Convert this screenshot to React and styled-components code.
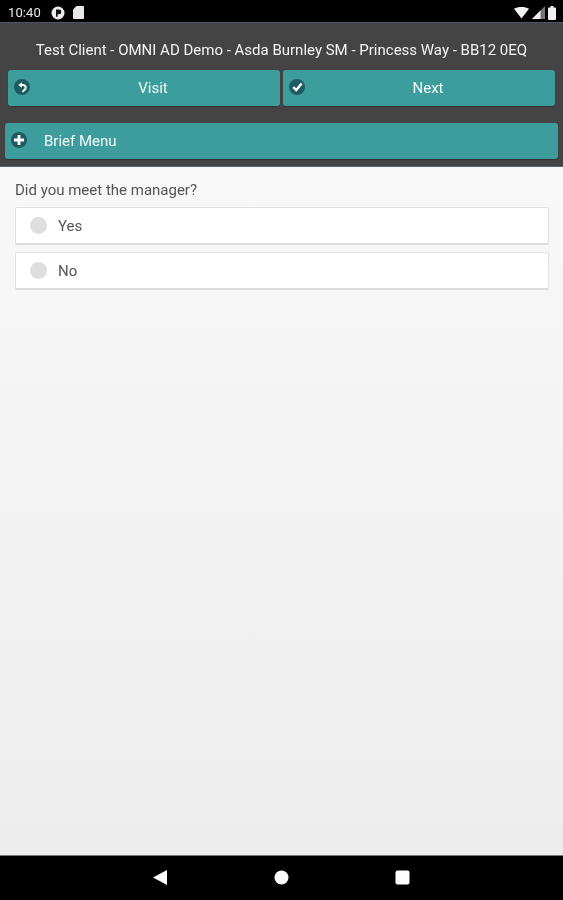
import React from "react";
import styled, { createGlobalStyle } from "styled-components";

const Global = createGlobalStyle`
  html, body { margin: 0; padding: 0; background: #000; }
  body { font-family: Roboto, "Liberation Sans", sans-serif; }
  #root { width: 563px; height: 900px; }
`;

const Screen = styled.div`
  width: 563px;
  height: 900px;
  display: flex;
  flex-direction: column;
  overflow: hidden;
  filter: blur(0.5px);
`;

const StatusBar = styled.div`
  height: 22px;
  flex: none;
  background: #000;
  display: flex;
  align-items: center;
  justify-content: space-between;
  padding: 3px 7px 0 8px;
  box-sizing: border-box;
  color: #e8e8e8;
`;

const StatusGroup = styled.div`
  display: flex;
  align-items: center;
  gap: ${(p) => p.$gap || 0}px;
`;

const Clock = styled.span`
  font-size: 13px;
  margin-right: 10px;
  letter-spacing: 0.1px;
`;

const Header = styled.header`
  flex: none;
  height: 145px;
  box-sizing: border-box;
  background: #444444;
  border-top: 1px solid #48586e;
  border-bottom: 1px solid #5a6470;
  display: flex;
  flex-direction: column;
  color: #fff;
`;

const Title = styled.h1`
  margin: 0;
  height: 47px;
  padding-top: 7px;
  box-sizing: border-box;
  display: flex;
  align-items: center;
  justify-content: center;
  font-size: 15px;
  font-weight: 400;
  color: #f4f4f4;
  white-space: nowrap;
`;

const ButtonRow = styled.div`
  display: grid;
  grid-template-columns: 272px 272px;
  gap: 3px;
  padding: 0 8px;
`;

const TealButton = styled.button`
  position: relative;
  width: 100%;
  height: 36px;
  border: 0;
  border-radius: 3px;
  background: #3d9d9d;
  box-shadow: 0 1px 1px rgba(0, 0, 0, 0.25);
  color: #f2fbfb;
  font-family: inherit;
  font-size: 15px;
  font-weight: 400;
  display: flex;
  align-items: center;
  justify-content: ${(p) => (p.$left ? "flex-start" : "center")};
  padding: 0 0 0 ${(p) => (p.$left ? 39 : 18)}px;
`;

const MenuWrap = styled.div`
  padding: 17px 5px 0;
`;

const IconBubble = styled.span`
  position: absolute;
  left: 6px;
  top: 9px;
  width: 16px;
  height: 16px;
  border-radius: 50%;
  background: #1f5b63;
  display: flex;
  align-items: center;
  justify-content: center;
`;

const Content = styled.main`
  flex: 1;
  min-height: 0;
  background: linear-gradient(#f8f8f8, #ededed);
  padding: 15px 14px 0 15px;
  display: flex;
  flex-direction: column;
  color: #4a4a4a;
`;

const Question = styled.p`
  margin: 0 0 9px;
  font-size: 15px;
  line-height: 16px;
  color: #555;
`;

const Options = styled.div`
  display: flex;
  flex-direction: column;
  gap: 7px;
`;

const Option = styled.label`
  height: 38px;
  box-sizing: border-box;
  background: #fff;
  border: 1px solid #e0e0e0;
  border-bottom: 2px solid #dcdcdc;
  border-radius: 2px;
  display: flex;
  align-items: center;
  padding-left: 14px;
  gap: 11px;
  font-size: 15px;
  color: #555;
`;

const Radio = styled.span`
  width: 17px;
  height: 17px;
  border-radius: 50%;
  background: #dedede;
  flex: none;
`;

const NavBar = styled.nav`
  flex: none;
  height: 45px;
  background: #000;
  border-top: 1px solid #777;
  box-sizing: border-box;
  display: grid;
  grid-template-columns: 121px 121px 121px;
  justify-content: center;
  align-items: center;
  justify-items: center;
  padding: 0 0 2px 0;
`;

const BackIcon = () => (
  <svg width="14" height="15" viewBox="0 0 14 15" style={{ marginRight: 2 }}><path d="M14 0v15L0 7.5z" fill="#fff" /></svg>
);
const HomeIcon = () => (
  <svg width="15" height="15" viewBox="0 0 15 15"><circle cx="7.5" cy="7.5" r="7" fill="#fff" /></svg>
);
const SquareIcon = () => (
  <svg width="15" height="15" viewBox="0 0 15 15"><rect x="0.5" y="0.5" width="14" height="14" rx="2" fill="#fff" /></svg>
);

const ParkIcon = () => (
  <svg width="14" height="14" viewBox="0 0 14 14">
    <circle cx="7" cy="7" r="6.5" fill="#eee" />
    <path d="M5 3.6h3a2.2 2.2 0 0 1 0 4.6H6.6v2.6H5z" fill="#111" />
  </svg>
);
const SdIcon = () => (
  <svg width="11" height="13" viewBox="0 0 11 13"><path d="M3.5 0H10a1 1 0 0 1 1 1v11a1 1 0 0 1-1 1H1a1 1 0 0 1-1-1V3.5z" fill="#e8e8e8" /></svg>
);
const WifiIcon = () => (
  <svg width="15" height="12" viewBox="0 0 15 12"><path d="M0 1.8C2 .6 4.6 0 7.5 0s5.5.6 7.5 1.8L7.5 11.5z" fill="#f2f2f2" /></svg>
);
const SignalIcon = () => (
  <svg width="13" height="13" viewBox="0 0 13 13"><path d="M13 0v13H0z" fill="#777" /><path d="M8.5 4.5V13H0z" fill="#f0f0f0" /></svg>
);
const BatteryIcon = () => (
  <svg width="8" height="14" viewBox="0 0 8 14"><path d="M2.5 0h3v1.5H7a1 1 0 0 1 1 1V13a1 1 0 0 1-1 1H1a1 1 0 0 1-1-1V2.5a1 1 0 0 1 1-1h1.5z" fill="#f0f0f0" /></svg>
);

const UndoGlyph = () => (
  <svg width="11" height="11" viewBox="0 0 11 11" fill="none" stroke="#fff" strokeWidth="1.9">
    <path d="M3 3h3a2.7 2.7 0 0 1 1.2 5.1L5.5 9.8" />
    <path d="M5 .3 1.3 3 5 5.7z" fill="#fff" stroke="none" />
  </svg>
);
const CheckGlyph = () => (
  <svg width="11" height="10" viewBox="0 0 11 10" fill="none" stroke="#fff" strokeWidth="2.4">
    <path d="M1.3 5.2 4.2 8 9.700 1.500" />
  </svg>
);
const PlusGlyph = () => (
  <svg width="10" height="10" viewBox="0 0 10 10" fill="none" stroke="#fff" strokeWidth="2.8">
    <path d="M5 0v10M0 5h10" />
  </svg>
);

export default function App() {
  return (
    <Screen>
      <Global />
      <StatusBar>
        <StatusGroup>
          <Clock>10:40</Clock>
          <StatusGroup $gap={8}>
            <ParkIcon />
            <SdIcon />
          </StatusGroup>
        </StatusGroup>
        <StatusGroup $gap={3}>
          <WifiIcon />
          <SignalIcon />
          <BatteryIcon />
        </StatusGroup>
      </StatusBar>
      <Header>
        <Title>Test Client - OMNI AD Demo - Asda Burnley SM - Princess Way - BB12 0EQ</Title>
        <ButtonRow>
          <TealButton>
            <IconBubble><UndoGlyph /></IconBubble>
            Visit
          </TealButton>
          <TealButton>
            <IconBubble><CheckGlyph /></IconBubble>
            Next
          </TealButton>
        </ButtonRow>
        <MenuWrap>
          <TealButton $left>
            <IconBubble><PlusGlyph /></IconBubble>
            Brief Menu
          </TealButton>
        </MenuWrap>
      </Header>
      <Content>
        <Question>Did you meet the manager?</Question>
        <Options>
          <Option><Radio />Yes</Option>
          <Option><Radio />No</Option>
        </Options>
      </Content>
      <NavBar>
        <BackIcon />
        <HomeIcon />
        <SquareIcon />
      </NavBar>
    </Screen>
  );
}
